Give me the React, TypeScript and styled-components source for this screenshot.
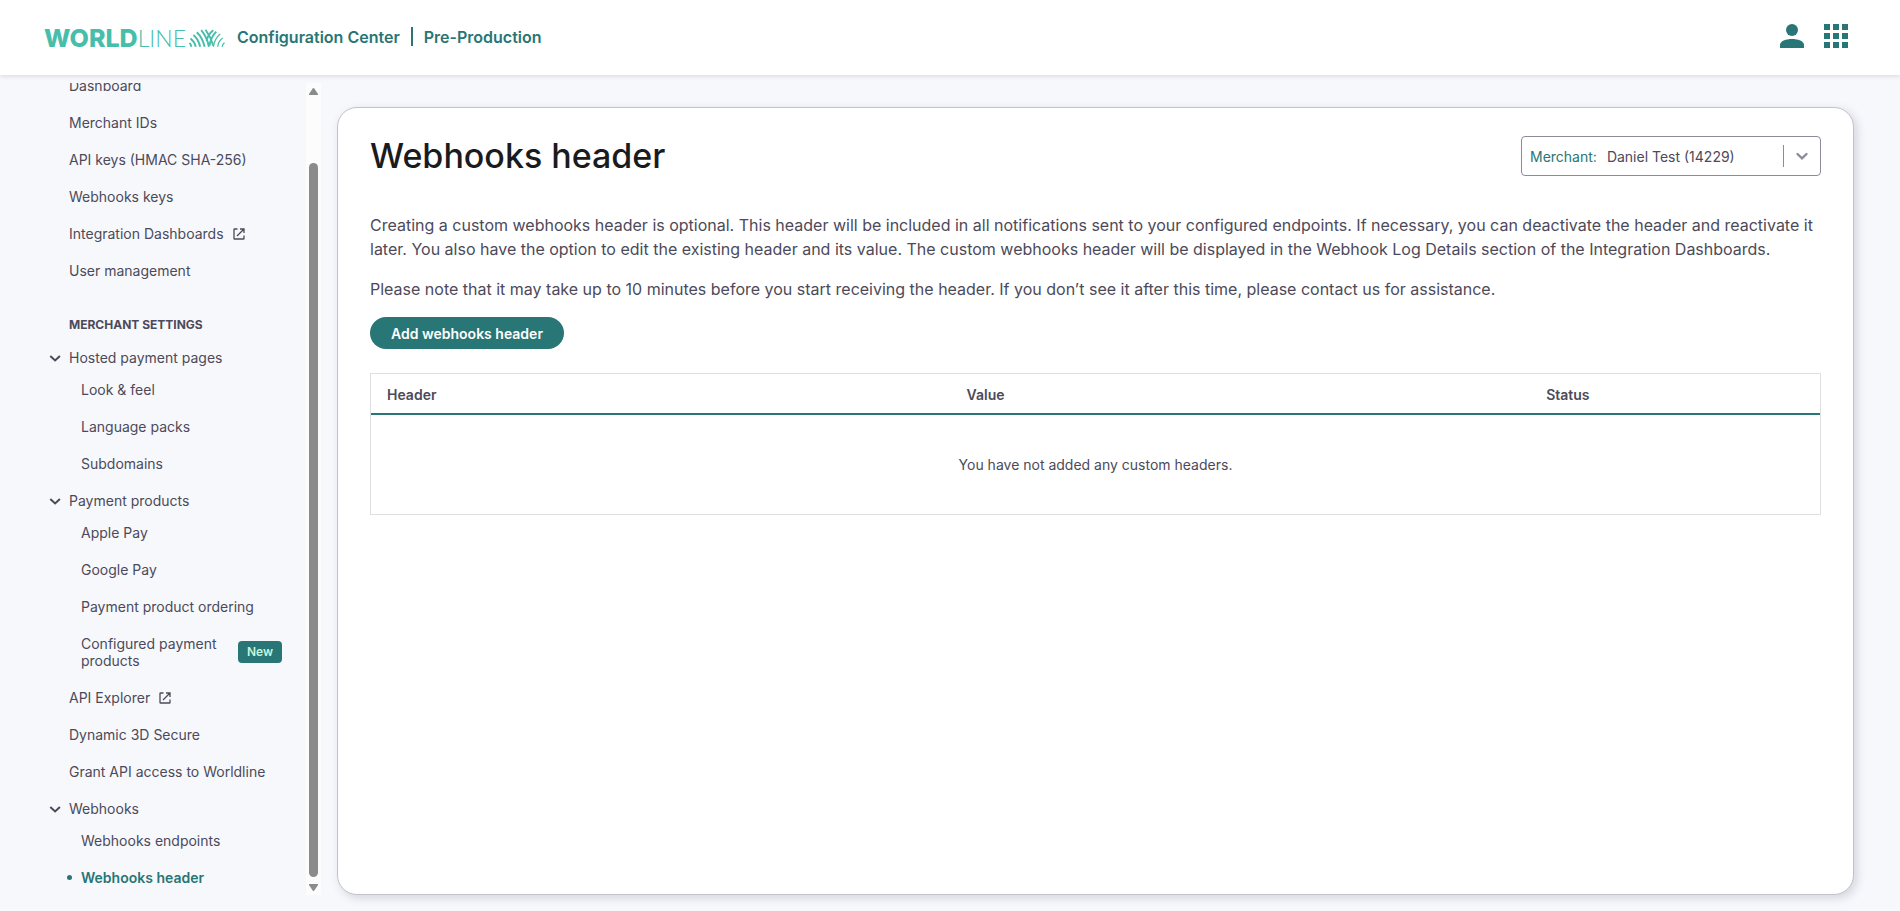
import React from 'react';
import styled, { createGlobalStyle } from 'styled-components';

const teal = '#287675';
const mint = '#46beaa';
const ink = '#4c4a5a';

const GlobalStyle = createGlobalStyle`
  * { box-sizing: border-box; }
  body {
    margin: 0;
    background: #f7f8fc;
    color: ${ink};
    font-family: Inter, sans-serif;
    font-size: 14px;
    line-height: 17px;
  }
  button, select { font: inherit; color: inherit; }
  a { color: inherit; text-decoration: none; }
`;

const Page = styled.div`
  display: flex;
  flex-direction: column;
  height: 100vh;
`;

const TopBar = styled.header`
  display: flex;
  align-items: center;
  flex: none;
  height: 75px;
  padding: 0 52px 0 44px;
  background: #fff;
  box-shadow: 0 2px 4px rgba(76, 74, 90, 0.14);
  z-index: 1;
`;

const Brand = styled.a`
  display: flex;
  align-items: baseline;
  width: 181px;
  margin-right: 12px;
  color: ${mint};
  line-height: 24px;
`;

const BrandStrong = styled.span`
  font-size: 25px;
  font-weight: 800;
`;

const BrandLight = styled.span`
  font-family: Lato, sans-serif;
  font-size: 23px;
  font-weight: 300;
`;

const BrandMark = styled.svg`
  margin-left: auto;
  flex: none;
`;

const ProductName = styled.div`
  display: flex;
  align-items: center;
  padding-bottom: 2px;
  color: ${teal};
  font-size: 16px;
  font-weight: 600;
  line-height: 20px;
`;

const NameDivider = styled.span`
  width: 2px;
  height: 19px;
  margin: 0 11px;
  background: ${teal};
`;

const TopActions = styled.div`
  display: flex;
  gap: 20px;
  margin-left: auto;
  margin-bottom: 3px;
`;

const IconButton = styled.button`
  display: flex;
  padding: 0;
  border: 0;
  background: none;
  color: ${teal};
`;

const Body = styled.div`
  display: flex;
  flex: 1;
  min-height: 0;
  padding-bottom: 16px;
`;

const Sidebar = styled.div`
  display: flex;
  flex: none;
  width: 321px;
  padding-top: 8px;
`;

const Nav = styled.nav`
  display: flex;
  flex: 1;
  flex-direction: column;
  justify-content: flex-end;
  overflow: hidden;
  padding: 0 24px 0 47px;
`;

const NavLink = styled.a<{ $nested?: boolean; $active?: boolean }>`
  display: flex;
  align-items: center;
  flex: none;
  gap: 8px;
  padding: 11px 0 9px ${(p) => (p.$nested ? 34 : 22)}px;
  color: ${(p) => (p.$active ? teal : ink)};
  font-weight: ${(p) => (p.$active ? 600 : 400)};
`;

const ActiveLink = styled(NavLink)`
  padding-left: 20px;
  gap: 9px;

  &::before {
    content: '';
    width: 5px;
    height: 5px;
    border-radius: 50%;
    background: ${teal};
  }
`;

const NavHeading = styled.h2`
  flex: none;
  margin: 29px 0 6px;
  padding-left: 22px;
  font-size: 12px;
  font-weight: 700;
  line-height: 15px;
`;

const GroupToggle = styled.button`
  display: flex;
  align-items: center;
  flex: none;
  gap: 8px;
  padding: 11px 0 4px;
  border: 0;
  background: none;
  text-align: left;
`;

const NewTag = styled.span`
  flex: none;
  width: 44px;
  margin-left: auto;
  border-radius: 4px;
  background: ${teal};
  color: #c5f5dc;
  font-size: 12px;
  font-weight: 600;
  line-height: 22px;
  text-align: center;
`;

const ScrollTrack = styled.div`
  display: flex;
  flex-direction: column;
  align-items: center;
  width: 15px;
  padding: 5px 0 4px;
  background: #fcfcfc;
`;

const ScrollThumb = styled.div`
  flex: 1;
  width: 9px;
  margin: 68px 0 7px;
  border-radius: 5px;
  background: #8b8b8b;
`;

const Card = styled.main`
  flex: 1;
  min-width: 0;
  margin: 32px 46px 0 16px;
  padding: 28px 32px;
  border: 1px solid #c3c2cb;
  border-radius: 20px;
  background: #fff;
  box-shadow: 3px 3px 10px rgba(76, 74, 90, 0.2);
`;

const CardTop = styled.div`
  display: flex;
  justify-content: space-between;
  margin-bottom: 37px;
`;

const Title = styled.h1`
  margin: 0;
  color: #1b1b1e;
  font-size: 34px;
  font-weight: 500;
  line-height: 40px;
`;

const MerchantBox = styled.div`
  display: flex;
  align-items: center;
  width: 300px;
  height: 40px;
  padding: 0 8px;
  border: 1px solid #8c8a9b;
  border-radius: 4px;
`;

const MerchantLabel = styled.label`
  color: ${teal};
`;

const MerchantSelect = styled.select`
  flex: 1;
  appearance: none;
  margin-left: 10px;
  padding: 0;
  border: 0;
  background: none;
`;

const SelectDivider = styled.span`
  width: 1px;
  height: 22px;
  margin-right: 8px;
  background: #8c8a9b;
`;

const Text = styled.p`
  margin: 0 0 16px;
  font-size: 16px;
  line-height: 24px;
`;

const AddButton = styled.button`
  height: 32px;
  padding: 0 21px;
  border: 0;
  border-radius: 16px;
  background: ${teal};
  color: #fff;
  font-weight: 600;
`;

const Table = styled.table`
  width: 100%;
  margin-top: 24px;
  border: 1px solid #dfdfe2;
  border-spacing: 0;
  table-layout: fixed;
`;

const HeadCell = styled.th<{ $width: string }>`
  width: ${(p) => p.$width};
  height: 41px;
  padding: 2px 16px 0;
  border-bottom: 2px solid ${teal};
  font-weight: 600;
  text-align: left;
`;

const EmptyCell = styled.td`
  height: 99px;
  padding: 0;
  text-align: center;
`;

const External = () => (
  <svg width="14" height="14" viewBox="0 0 14 14" fill="none" stroke="currentColor" strokeWidth="1.3" aria-hidden="true">
    <path d="M5.500 2H2.600Q2 2 2 2.600V11.400Q2 12 2.600 12H11.400Q12 12 12 11.400V8.500M8 2H12V6M12 2L5 9" />
  </svg>
);

const Chevron = () => (
  <svg width="14" height="14" viewBox="0 0 14 14" fill="none" stroke="currentColor" strokeWidth="2" aria-hidden="true">
    <path d="M3.300 5l4.800 4.500L12.900 5" />
  </svg>
);

const Group = ({ children }: { children: React.ReactNode }) => (
  <GroupToggle type="button" aria-expanded="true">
    <Chevron />
    {children}
  </GroupToggle>
);

export default function App() {
  return (
    <>
      <GlobalStyle />
      <Page>
        <TopBar>
          <Brand href="#">
            <BrandStrong>WORLD</BrandStrong>
            <BrandLight>LINE</BrandLight>
            <BrandMark width="36" height="18" viewBox="0 0 37 18" fill="none" stroke={mint} aria-hidden="true">
              <path strokeWidth="2" d="M.5 14Q2 15.500 2.500 18M1.500 9.500Q5.500 12.500 7 18M4.500 6Q9.500 10 11.500 18M8 3Q14 8.500 16 18M12.500 1Q18.500 8 20.500 18M17 .5Q22.500 8 25 17" />
              <path strokeWidth="2" d="M25 1Q19.500 5 18 12M28 2.500Q22.500 8 21 17" />
              <path strokeWidth="1.300" d="M32 5Q26.500 9.500 25 18M34.500 9Q30 12.500 29.500 18M36.500 14Q34.500 15.500 34 18" />
            </BrandMark>
          </Brand>
          <ProductName>
            Configuration Center
            <NameDivider />
            Pre-Production
          </ProductName>
          <TopActions>
            <IconButton type="button" aria-label="Account">
              <svg width="24" height="24" viewBox="0 0 24 24" fill="currentColor">
                <circle cx="12" cy="6" r="6" />
                <path d="M0 24v-3c0-4 6-6 12-6s12 2 12 6v3z" />
              </svg>
            </IconButton>
            <IconButton type="button" aria-label="Applications">
              <svg width="24" height="24" viewBox="0 0 24 24" fill="currentColor">
                <path d="M0 0h6v6H0zM9 0h6v6H9zM18 0h6v6h-6zM0 9h6v6H0zM9 9h6v6H9zM18 9h6v6h-6zM0 18h6v6H0zM9 18h6v6H9zM18 18h6v6h-6z" />
              </svg>
            </IconButton>
          </TopActions>
        </TopBar>
        <Body>
          <Sidebar>
            <Nav>
              <NavLink href="#">Dashboard</NavLink>
              <NavLink href="#">Merchant IDs</NavLink>
              <NavLink href="#">API keys (HMAC SHA-256)</NavLink>
              <NavLink href="#">Webhooks keys</NavLink>
              <NavLink href="#">Integration Dashboards <External /></NavLink>
              <NavLink href="#">User management</NavLink>
              <NavHeading>MERCHANT SETTINGS</NavHeading>
              <Group>Hosted payment pages</Group>
              <NavLink $nested href="#">Look &amp; feel</NavLink>
              <NavLink $nested href="#">Language packs</NavLink>
              <NavLink $nested href="#">Subdomains</NavLink>
              <Group>Payment products</Group>
              <NavLink $nested href="#">Apple Pay</NavLink>
              <NavLink $nested href="#">Google Pay</NavLink>
              <NavLink $nested href="#">Payment product ordering</NavLink>
              <NavLink $nested href="#">Configured payment products <NewTag>New</NewTag></NavLink>
              <NavLink href="#">API Explorer <External /></NavLink>
              <NavLink href="#">Dynamic 3D Secure</NavLink>
              <NavLink href="#">Grant API access to Worldline</NavLink>
              <Group>Webhooks</Group>
              <NavLink $nested href="#">Webhooks endpoints</NavLink>
              <ActiveLink $active href="#" aria-current="page">Webhooks header</ActiveLink>
            </Nav>
            <ScrollTrack aria-hidden="true">
              <svg width="9" height="7" viewBox="0 0 9 7" fill="#8b8b8b"><path d="M3.700 .5q.8-1 1.600 0L9 6v1H0V6z" /></svg>
              <ScrollThumb />
              <svg width="9" height="7" viewBox="0 0 9 7" fill="#8b8b8b"><path d="M3.700 6.500q.8 1 1.600 0L9 1V0H0v1z" /></svg>
            </ScrollTrack>
          </Sidebar>
          <Card>
            <CardTop>
              <Title>Webhooks header</Title>
              <MerchantBox>
                <MerchantLabel htmlFor="merchant">Merchant:</MerchantLabel>
                <MerchantSelect id="merchant">
                  <option>Daniel Test (14229)</option>
                </MerchantSelect>
                <SelectDivider />
                <svg width="20" height="20" viewBox="0 0 20 20" fill="none" stroke="#8c8a9b" strokeWidth="2.400" strokeLinecap="round" aria-hidden="true">
                  <path d="M5.500 8l4.500 4.300L14.500 8" />
                </svg>
              </MerchantBox>
            </CardTop>
            <Text>
              Creating a custom webhooks header is optional. This header will be included in all notifications sent to your configured endpoints. If necessary, you can deactivate the header and reactivate it later. You also have the option to edit the existing header and its value. The custom webhooks header will be displayed in the Webhook Log Details section of the Integration Dashboards.
            </Text>
            <Text>
              Please note that it may take up to 10 minutes before you start receiving the header. If you don’t see it after this time, please contact us for assistance.
            </Text>
            <AddButton type="button">Add webhooks header</AddButton>
            <Table>
              <thead>
                <tr>
                  <HeadCell $width="40%">Header</HeadCell>
                  <HeadCell $width="40%">Value</HeadCell>
                  <HeadCell $width="20%">Status</HeadCell>
                </tr>
              </thead>
              <tbody>
                <tr>
                  <EmptyCell colSpan={3}>You have not added any custom headers.</EmptyCell>
                </tr>
              </tbody>
            </Table>
          </Card>
        </Body>
      </Page>
    </>
  );
}
